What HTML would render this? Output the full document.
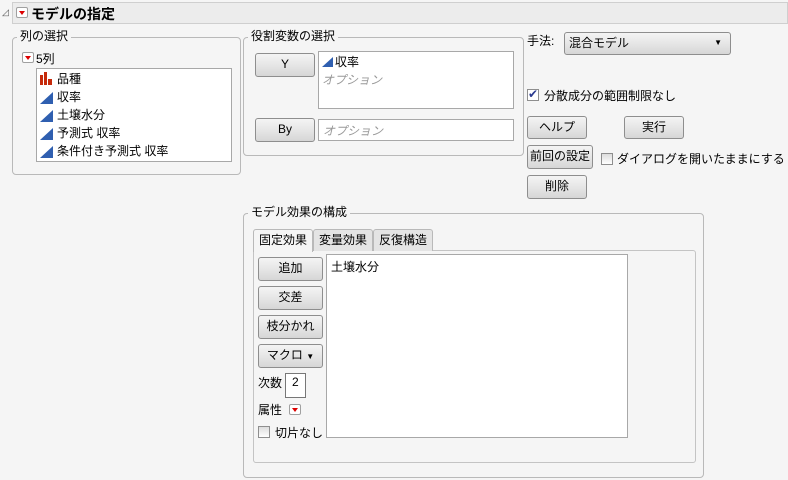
<!DOCTYPE html>
<html><head><meta charset="utf-8"><style>
*{box-sizing:border-box;margin:0;padding:0}
body{width:788px;height:480px;background:#f5f5f5;font-family:"Liberation Sans","Noto Sans CJK JP",sans-serif;font-size:12px;color:#000;position:relative;overflow:hidden}
.a{position:absolute;white-space:nowrap}
.grp{position:absolute;border:1px solid #b9b9b9;border-radius:4px}
.lbl{position:absolute;background:#f5f5f5;padding:0 3px;font-size:12px;line-height:14px}
.btn{position:absolute;border:1px solid #8e8e8e;border-radius:3px;background:linear-gradient(#f4f4f4,#e6e6e6 50%,#d6d6d6);text-align:center;font-size:12px;line-height:20px}
.box{position:absolute;background:#fff;border:1px solid #a8a8a8}
.rb{position:absolute;width:12px;height:11px;border:1px solid #a0a0a0;background:#fff;border-radius:2px}
.rb:after{content:"";position:absolute;left:2px;top:3px;border-left:3px solid transparent;border-right:3px solid transparent;border-top:4px solid #d00}
.cb{position:absolute;width:12px;height:12px;border:1px solid #8e8e8e;background:linear-gradient(#ddd,#fff)}
.tri{position:absolute;width:0;height:0;border-left:13px solid transparent;border-bottom:12px solid #2f5fb0}
.it{position:absolute;left:20px;font-size:12px}
.opt{color:#999;font-style:italic}
.tab{position:absolute;top:229px;height:22px;border:1px solid #b9b9b9;border-bottom:none;background:#e4e4e4;text-align:center;line-height:21px;border-radius:3px 3px 0 0}
</style></head><body>
<div class="a" style="left:12px;top:2px;width:776px;height:22px;background:#ececec;border:1px solid #cfcfcf"></div>
<div class="a" style="left:2px;top:7px;font-size:9px;color:#555">◿</div>
<div class="rb" style="left:16px;top:7px"></div>
<div class="a" style="left:31px;top:4px;font-size:14px;font-weight:bold">モデルの指定</div>

<div class="grp" style="left:12px;top:37px;width:229px;height:138px"></div>
<div class="lbl" style="left:17px;top:29px">列の選択</div>
<div class="rb" style="left:22px;top:52px"></div>
<div class="a" style="left:36px;top:50px">5列</div>
<div class="box" style="left:36px;top:68px;width:196px;height:94px">
 <svg class="a" style="left:3px;top:3px" width="14" height="13"><rect x="0" y="3" width="3" height="10" fill="#c62a0b"/><rect x="4" y="0" width="3" height="13" fill="#c62a0b"/><rect x="8" y="7" width="4" height="6" fill="#c62a0b"/></svg>
 <div class="it" style="top:1px">品種</div>
 <div class="tri" style="left:3px;top:23px"></div><div class="it" style="top:19px">収率</div>
 <div class="tri" style="left:3px;top:41px"></div><div class="it" style="top:37px">土壌水分</div>
 <div class="tri" style="left:3px;top:59px"></div><div class="it" style="top:55px">予測式 収率</div>
 <div class="tri" style="left:3px;top:77px"></div><div class="it" style="top:73px">条件付き予測式 収率</div>
</div>

<div class="grp" style="left:243px;top:37px;width:281px;height:119px"></div>
<div class="lbl" style="left:248px;top:29px">役割変数の選択</div>
<div class="btn" style="left:255px;top:53px;width:60px;height:24px">Y</div>
<div class="box" style="left:318px;top:51px;width:196px;height:58px">
 <div class="tri" style="left:3px;top:5px;border-left-width:11px;border-bottom-width:10px"></div>
 <div class="a" style="left:16px;top:1px">収率</div>
 <div class="a opt" style="left:3px;top:19px">オプション</div>
</div>
<div class="btn" style="left:255px;top:118px;width:60px;height:24px">By</div>
<div class="box" style="left:318px;top:119px;width:196px;height:22px"><div class="a opt" style="left:4px;top:2px">オプション</div></div>

<div class="a" style="left:527px;top:32px">手法:</div>
<div class="btn" style="left:564px;top:32px;width:167px;height:23px;text-align:left;padding-left:4px">混合モデル<span style="position:absolute;right:8px;top:0;font-size:8px">▼</span></div>
<div class="cb" style="left:527px;top:89px;background:#fff"><span class="a" style="left:0;top:-3px;font-size:12px;color:#2b3a8f">✔</span></div>
<div class="a" style="left:544px;top:87px">分散成分の範囲制限なし</div>
<div class="btn" style="left:527px;top:116px;width:60px;height:23px">ヘルプ</div>
<div class="btn" style="left:624px;top:116px;width:60px;height:23px">実行</div>
<div class="btn" style="left:527px;top:145px;width:66px;height:24px">前回の設定</div>
<div class="cb" style="left:601px;top:153px"></div>
<div class="a" style="left:617px;top:150px">ダイアログを開いたままにする</div>
<div class="btn" style="left:527px;top:175px;width:60px;height:24px">削除</div>

<div class="grp" style="left:243px;top:213px;width:461px;height:265px"></div>
<div class="lbl" style="left:248px;top:205px">モデル効果の構成</div>
<div class="a" style="left:253px;top:250px;width:443px;height:213px;border:1px solid #c4c4c4;border-radius:0 3px 3px 3px"></div>
<div class="tab" style="left:253px;width:60px;background:#f5f5f5;height:23px">固定効果</div>
<div class="tab" style="left:313px;width:60px">変量効果</div>
<div class="tab" style="left:373px;width:60px">反復構造</div>
<div class="btn" style="left:258px;top:257px;width:65px;height:24px">追加</div>
<div class="btn" style="left:258px;top:286px;width:65px;height:24px">交差</div>
<div class="btn" style="left:258px;top:315px;width:65px;height:24px">枝分かれ</div>
<div class="btn" style="left:258px;top:344px;width:65px;height:24px">マクロ <span style="font-size:8px">▼</span></div>
<div class="a" style="left:258px;top:374px">次数</div>
<div class="box" style="left:285px;top:373px;width:21px;height:25px;border-color:#777"><div class="a" style="left:6px;top:1px">2</div></div>
<div class="a" style="left:258px;top:401px">属性</div>
<div class="rb" style="left:289px;top:404px"></div>
<div class="cb" style="left:258px;top:426px"></div>
<div class="a" style="left:275px;top:424px">切片なし</div>
<div class="box" style="left:326px;top:254px;width:302px;height:184px"><div class="a" style="left:4px;top:3px">土壌水分</div></div>
</body></html>
